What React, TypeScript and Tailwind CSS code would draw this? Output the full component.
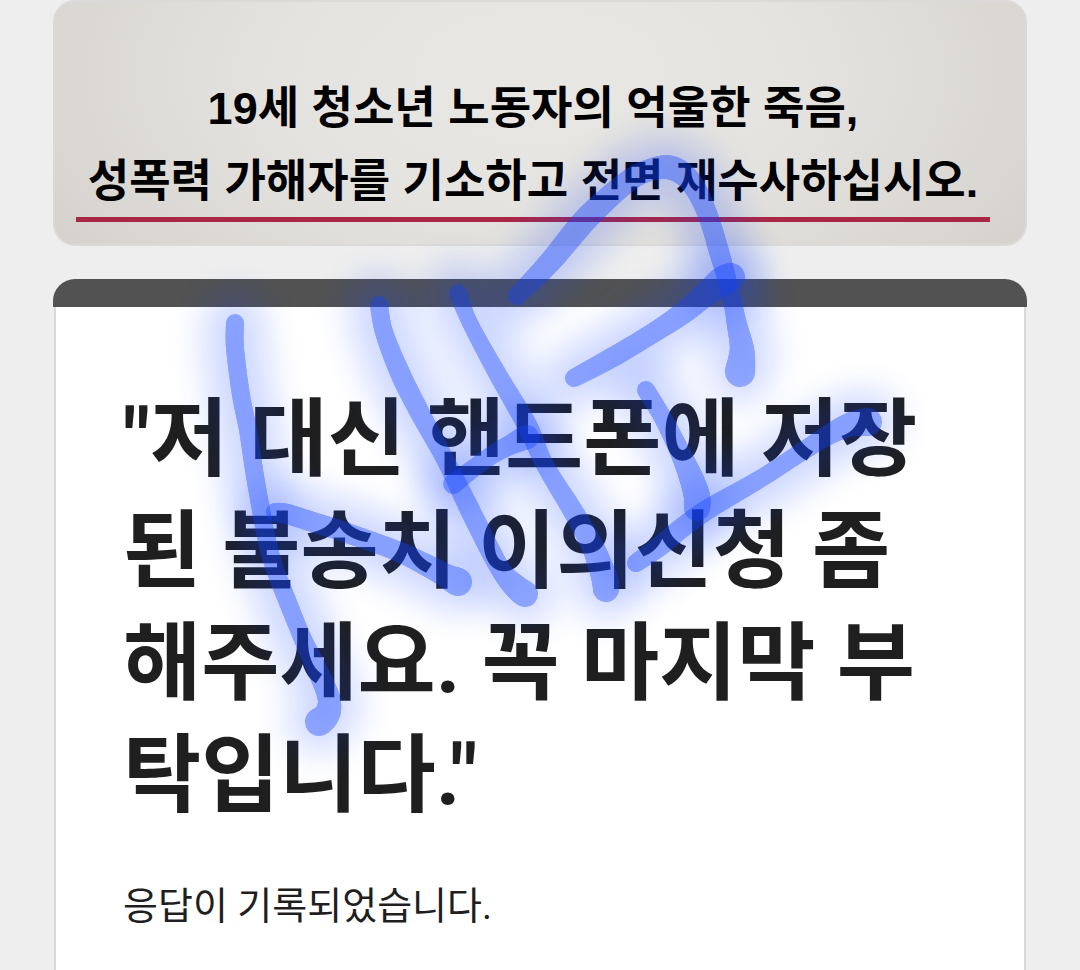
const INK = "#1141ff";

/** A pen sample: x, y and half of the line's width there. */
type Sample = [number, number, number];

const strokes: Sample[][] = [
  [
    [235, 323, 9], [235, 348, 9], [241, 395, 9], [248, 430, 9], [254, 470, 9], [261, 510, 9], [268, 545, 9],
    [276, 572, 9], [287, 600, 9], [302, 637, 9], [316, 667, 10], [328, 695, 11], [329, 709, 12], [325, 717, 13], [319, 722, 14],
  ],
  [
    [275, 512, 9], [287, 514, 10], [313, 522, 10], [347, 533, 10], [397, 551, 10], [430, 567, 11], [448, 577, 12], [458, 582, 14],
  ],
  [
    [379, 305, 9], [384, 332, 9], [400, 373, 10], [420, 413, 10], [447, 463, 9], [470, 510, 10], [490, 550, 10],
    [503, 573, 10], [516, 587, 12], [525, 594, 13],
  ],
  [
    [458, 293, 9], [470, 323, 8], [497, 373, 9], [527, 425, 10], [545, 465, 9], [573, 511, 10], [592, 545, 11],
    [600, 565, 12], [605, 580, 13], [606, 589, 13],
  ],
  [[453, 484, 10], [470, 471, 9], [492, 455, 9], [512, 444, 10], [527, 437, 12]],
  [
    [517, 296, 9], [550, 262, 11], [587, 218, 12], [627, 182, 11], [650, 170, 11], [672, 168, 12], [691, 182, 11],
    [707, 213, 10], [720, 255, 10], [731, 295, 9], [737, 325, 10], [742, 350, 12], [740, 372, 15],
  ],
  [
    [574, 378, 9], [613, 357, 10], [653, 333, 10], [683, 313, 11], [706, 294, 12], [722, 281, 14], [731, 277, 14],
  ],
  [
    [646, 390, 9], [663, 418, 9], [680, 452, 10], [692, 480, 12], [697, 497, 13], [697, 508, 13],
  ],
  [
    [636, 563, 9], [660, 546, 10], [683, 527, 10], [710, 508, 10], [760, 479, 9], [800, 453, 9], [830, 434, 10],
    [852, 424, 12], [868, 422, 14],
  ],
];

const spline = (a: number, b: number, c: number, d: number, t: number) =>
  0.5 * (2 * b + (c - a) * t + (2 * a - 5 * b + 4 * c - d) * t * t + (3 * b - a - 3 * c + d) * t * t * t);

function smooth(points: Sample[], steps = 10): Sample[] {
  const out: Sample[] = [];
  for (let i = 0; i < points.length - 1; i++) {
    const p0 = points[Math.max(i - 1, 0)];
    const p1 = points[i];
    const p2 = points[i + 1];
    const p3 = points[Math.min(i + 2, points.length - 1)];
    for (let s = 0; s < steps; s++) {
      const t = s / steps;
      out.push([0, 1, 2].map((k) => spline(p0[k], p1[k], p2[k], p3[k], t)) as Sample);
    }
  }
  out.push(points[points.length - 1]);
  return out;
}

const lines = strokes.map((points) => smooth(points));

function Handwriting() {
  return (
    <svg
      aria-hidden="true"
      viewBox="0 0 1080 970"
      className="pointer-events-none absolute top-0 left-0 w-full"
      fill="none"
      strokeLinecap="round"
      strokeLinejoin="round"
    >
      <defs>
        <filter id="glow" filterUnits="userSpaceOnUse" x="100" y="40" width="960" height="800">
          <feGaussianBlur stdDeviation="17" />
        </filter>
      </defs>
      {lines.map((line, i) => (
        <g key={i} filter="url(#glow)" opacity="0.2" stroke={INK}>
          <polyline points={line.map(([x, y]) => `${x},${y}`).join(" ")} strokeWidth="60" />
        </g>
      ))}
      {lines.map((line, i) => (
        <g key={i} opacity="0.38" stroke={INK}>
          {line.slice(1).map(([x, y, r], j) => (
            <line key={j} x1={line[j][0]} y1={line[j][1]} x2={x} y2={y} strokeWidth={r * 2} />
          ))}
        </g>
      ))}
    </svg>
  );
}

export default function App() {
  return (
    <div className="relative flex min-h-screen flex-col overflow-hidden bg-[#eeeeee] px-[53px] text-[#1f1f1f]">
      <header className="flex flex-col items-center rounded-[22px] border-2 border-[#dcdad8] bg-[radial-gradient(ellipse_60%_130%_at_50%_30%,#e9e7e3_0%,#e5e3df_45%,#d5d2ce_100%)] pt-[70px] pr-[14px] pb-[22px] font-['Liberation_Sans','Noto_Sans_CJK_KR',sans-serif] text-[45px] leading-[74px] font-bold whitespace-nowrap text-black">
        <p>19세 청소년 노동자의 억울한 죽음,</p>
        <p className="border-b-[5px] border-[#a92645] px-3 leading-[71px]">
          성폭력 가해자를 기소하고 전면 재수사하십시오.
        </p>
      </header>

      <main className="mt-[33px] flex flex-1 flex-col font-[Roboto,'Noto_Sans_CJK_KR',sans-serif]">
        <div className="h-7 rounded-t-[22px] bg-[#525252]" />
        <div className="mx-px flex-1 border-x-2 border-[#d9d9d9] bg-white px-[67px] pt-[77px] pb-10">
          <h1 className="text-[85px] leading-[112px] font-bold break-all">
            "저 대신 핸드폰에 저장된 불송치 이의신청 좀 해주세요. 꼭 마지막 부탁입니다."
          </h1>
          <p className="mt-12 text-[38px] leading-[52px]">응답이 기록되었습니다.</p>
        </div>
      </main>

      <Handwriting />
    </div>
  );
}
